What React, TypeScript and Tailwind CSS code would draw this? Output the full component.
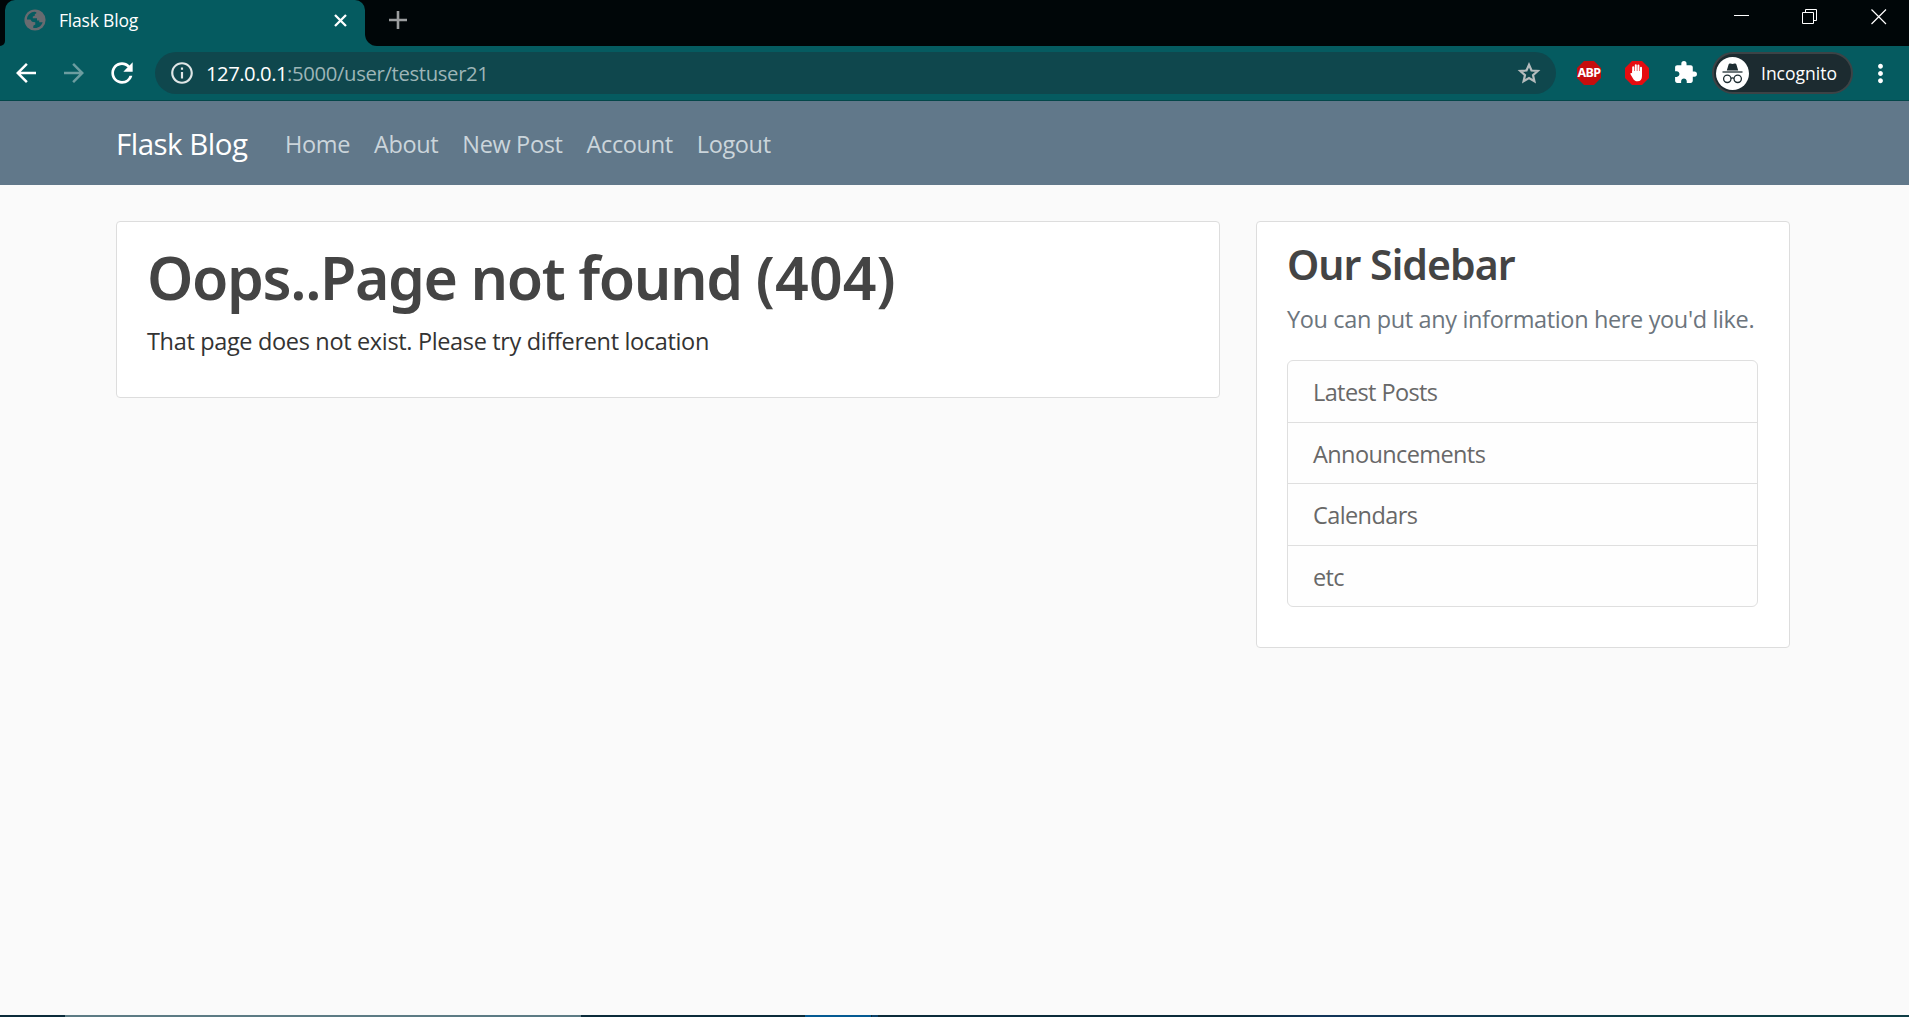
import {
  MdArrowBack,
  MdArrowForward,
  MdExtension,
  MdInfoOutline,
  MdMoreVert,
  MdRefresh,
} from "react-icons/md";

const navItems = ["Home", "About", "New Post", "Account", "Logout"];
const sidebarItems = ["Latest Posts", "Announcements", "Calendars", "etc"];

function Globe() {
  return (
    <svg width="22" height="22" viewBox="0 0 22 22">
      <circle cx="11" cy="11" r="10.6" fill="#686b70" />
      <path
        d="M3 9.2C3.8 5.600 7 3 10.400 2.800L12.300 3.200V4.200L10.800 5.300V6.700L8.800 7.600V9.300H13V11.600H15.200V13.300H18.600C17.700 16.700 14.700 19 11.200 19.100L9.300 18.900V16.700L11.300 15.600V13.300L8 12.800L6.400 10.400L3 10.500Z"
        fill="#055b60"
      />
    </svg>
  );
}

function Star() {
  return (
    <svg width="24" height="24" viewBox="0 0 24 24" fill="none" stroke="#b5bcbd" strokeWidth="2.2">
      <path d="M12 3.800L14.500 9.500L20.700 10L16 14.100L17.400 20.200L12 17L6.600 20.200L8 14.100L3.300 10L9.500 9.500Z" />
    </svg>
  );
}

function TabStrip() {
  return (
    <div className="flex h-[46px] bg-[#000608]">
      <div className="flex h-[46px] w-[5px] items-end bg-[#055b60]">
        <div className="h-[46px] w-[5px] rounded-br-[8px] bg-[#000608]" />
      </div>
      <div className="flex w-[360px] items-start rounded-t-[10px] bg-[#055b60] pt-[9px] pl-[19px]">
        <Globe />
        <span className="ml-[13px] h-[22px] w-[275px] text-[17.5px] leading-[22px] tracking-[-0.2px] whitespace-nowrap text-white">
          Flask Blog
        </span>
        <svg className="mt-[5px] shrink-0" width="13" height="13" viewBox="0 0 13 13">
          <path d="M1 1L12 12M12 1L1 12" stroke="#fff" strokeWidth="2.3" />
        </svg>
      </div>
      <div className="h-[46px] w-[100px] bg-[#055b60]">
        <div className="h-[46px] rounded-bl-[12px] bg-[#000608] pt-[11px] pl-[24px]">
          <svg width="18" height="18" viewBox="0 0 18 18">
            <path d="M9 0V18M0 9H18" stroke="#9b9e9f" strokeWidth="2.600" />
          </svg>
        </div>
      </div>
      <div className="ml-auto flex gap-[53px] pt-[9px] pr-[22px]">
        <svg width="16" height="16" viewBox="0 0 16 16" shapeRendering="crispEdges">
          <path d="M1 6.500H16" stroke="#fff" />
        </svg>
        <svg width="16" height="16" viewBox="0 0 16 16" fill="none" stroke="#fff">
          <path d="M.5 3.500H11.500V14.500H.5Z M3.500 3.500V.5H14.500V11.500H11.500" />
        </svg>
        <svg width="16" height="16" viewBox="0 0 16 16" stroke="#fff" strokeWidth="1.200">
          <path d="M.5 .5L15 15M15 .5L.5 15" />
        </svg>
      </div>
    </div>
  );
}

function AdblockPlus() {
  return (
    <div className="relative flex size-6 items-center justify-center">
      <svg className="absolute inset-0" width="24" height="24" viewBox="0 0 24 24">
        <path d="M7 0H17L24 7V17L17 24H7L0 17V7Z" fill="#c70d0d" />
      </svg>
      <span className="relative font-['Noto_Sans'] text-[12.5px] leading-[24px] font-bold tracking-[-0.6px] text-white">
        ABP
      </span>
    </div>
  );
}

function AdblockHand() {
  return (
    <svg width="24" height="24" viewBox="0 0 24 24">
      <path d="M7 0H17L24 7V17L17 24H7L0 17V7Z" fill="#e60c10" />
      <path
        d="M8.200 12V6.200M10.800 11V4.300M13.400 11V4.600M16 12V6.800"
        stroke="#fff"
        strokeWidth="2"
        strokeLinecap="round"
      />
      <path
        d="M7.200 10H17V15C17 18.300 15.300 20.300 12.600 20.300C10.300 20.300 9 19.100 8 17.400L5.500 13.200C5.100 12.200 6.300 11.700 7.200 12.500Z"
        fill="#fff"
      />
    </svg>
  );
}

function IncognitoBadge() {
  return (
    <svg width="33" height="33" viewBox="0 0 33 33">
      <circle cx="16.500" cy="16.500" r="16.500" fill="#fff" />
      <path
        d="M10.800 13.500L12.600 7.400C12.900 6.500 13.600 6.200 14.400 6.500L16.500 7.100L18.600 6.500C19.400 6.200 20.100 6.500 20.400 7.400L22.200 13.500Z"
        fill="#1e2d32"
      />
      <path d="M6.500 15H26.500" stroke="#1e2d32" strokeWidth="1.300" />
      <g fill="none" stroke="#1e2d32" strokeWidth="1.300">
        <circle cx="11.300" cy="21.800" r="3.700" />
        <circle cx="21.700" cy="21.800" r="3.700" />
        <path d="M15 21.400Q16.500 20.300 18 21.400" />
      </g>
    </svg>
  );
}

function Toolbar() {
  return (
    <div className="flex h-[55px] items-start border-b border-[#04474a] bg-[#055b60] pt-[6px]">
      <div className="flex h-[42px] w-[155px] items-center gap-[18px] pl-[11px] text-white">
        <MdArrowBack className="size-[30px]" />
        <MdArrowForward className="size-[30px] text-[#6c9da0]" />
        <MdRefresh className="-ml-px size-[32px]" />
      </div>
      <div className="flex h-[42px] w-[1401px] items-center rounded-full bg-[#0f474d] pr-[15px] pl-[14px]">
        <MdInfoOutline className="size-[26px] text-[#dfe6e6]" />
        <span className="mr-auto ml-[11px] pt-px text-[20.3px] tracking-[-0.35px] whitespace-nowrap text-[#9db5b7]">
          <span className="tracking-[-0.5px] text-white">127.0.0.1</span>:5000/user/testuser21
        </span>
        <Star />
      </div>
      <div className="flex h-[42px] flex-1 items-center pl-[21px]">
        <AdblockPlus />
        <div className="ml-6">
          <AdblockHand />
        </div>
        <MdExtension className="ml-[24px] size-[25px] -translate-y-px text-white" />
        <div className="ml-[14px] flex h-[42px] w-[141px] items-center rounded-full border-2 border-[#3c4346] bg-[#1c2b30] pl-[2px]">
          <IncognitoBadge />
          <span className="ml-3 text-[17.5px] leading-[22px] tracking-normal text-white">Incognito</span>
        </div>
        <MdMoreVert className="ml-[13px] size-[29px] text-white" />
      </div>
    </div>
  );
}

function Navbar() {
  return (
    <nav className="flex h-[84px] items-center bg-[#61788a] pt-[2px] pl-[116px]">
      <span className="w-[169px] text-[29.5px] leading-[44px] tracking-[-0.5px] whitespace-nowrap text-white">
        Flask Blog
      </span>
      <div className="flex gap-[24px] text-[23.5px] leading-9 tracking-[-0.36px] text-[#cbd5db]">
        {navItems.map((item) => (
          <span key={item} className="whitespace-nowrap">
            {item}
          </span>
        ))}
      </div>
    </nav>
  );
}

function Sidebar() {
  return (
    <aside className="h-[427px] w-[534px] rounded-[4px] border border-[#dddddd] bg-white px-[30px] pt-[17px]">
      <h3 className="font-['Noto_Sans'] text-[41px] leading-[50px] font-semibold tracking-[-0.95px] text-[#444444]">
        Our Sidebar
      </h3>
      <p className="mt-3 text-[23.5px] leading-9 tracking-[-0.36px] whitespace-nowrap text-[#6c757d]">
        You can put any information here you'd like.
      </p>
      <ul className="mt-[23px] h-[247px] w-[471px] divide-y divide-[#dfdfdf] overflow-hidden rounded-[6px] border border-[#dfdfdf] bg-[#fefefe]">
        {sidebarItems.map((item) => (
          <li
            key={item}
            className="flex h-[61.5px] items-center pt-[2px] pl-[25px] text-[23.5px] leading-9 tracking-[-0.6px] text-[#686868]"
          >
            {item}
          </li>
        ))}
      </ul>
    </aside>
  );
}

function TaskbarEdge() {
  return (
    <div className="flex h-[2px] bg-[#0b2b3a]">
      <div className="ml-[65px] h-[2px] w-[516px] bg-[#5c7b84]" />
      <div className="ml-[224px] h-[2px] w-[66px] bg-[#045a92]" />
      <div className="ml-px h-[2px] w-[6px] bg-[#0b426a]" />
      <div className="h-[2px] flex-1 bg-linear-to-r from-[#0b2b3a] from-35% via-[#12355a] via-43% to-[#0e3d45] to-75%" />
    </div>
  );
}

export default function App() {
  return (
    <div className="flex h-[1017px] w-[1909px] flex-col overflow-hidden bg-[#fafafa] font-['Open_Sans','Noto_Sans',sans-serif]">
      <TabStrip />
      <Toolbar />
      <Navbar />
      <main className="flex flex-1 items-start gap-9 pt-9 pl-[116px]">
        <section className="h-[177px] w-[1104px] rounded-[4px] border border-[#dddddd] bg-white px-[30px] pt-[19px]">
          <h1 className="font-['Noto_Sans'] text-[59px] leading-[72px] font-semibold tracking-[-1.4px] whitespace-nowrap text-[#444444]">
            Oops..Page not found <span className="tracking-[0.1px]">(404)</span>
          </h1>
          <p className="mt-[10px] text-[23.5px] leading-9 tracking-[-0.34px] text-[#333333]">
            That page does not exist. Please try different location
          </p>
        </section>
        <Sidebar />
      </main>
      <TaskbarEdge />
    </div>
  );
}
